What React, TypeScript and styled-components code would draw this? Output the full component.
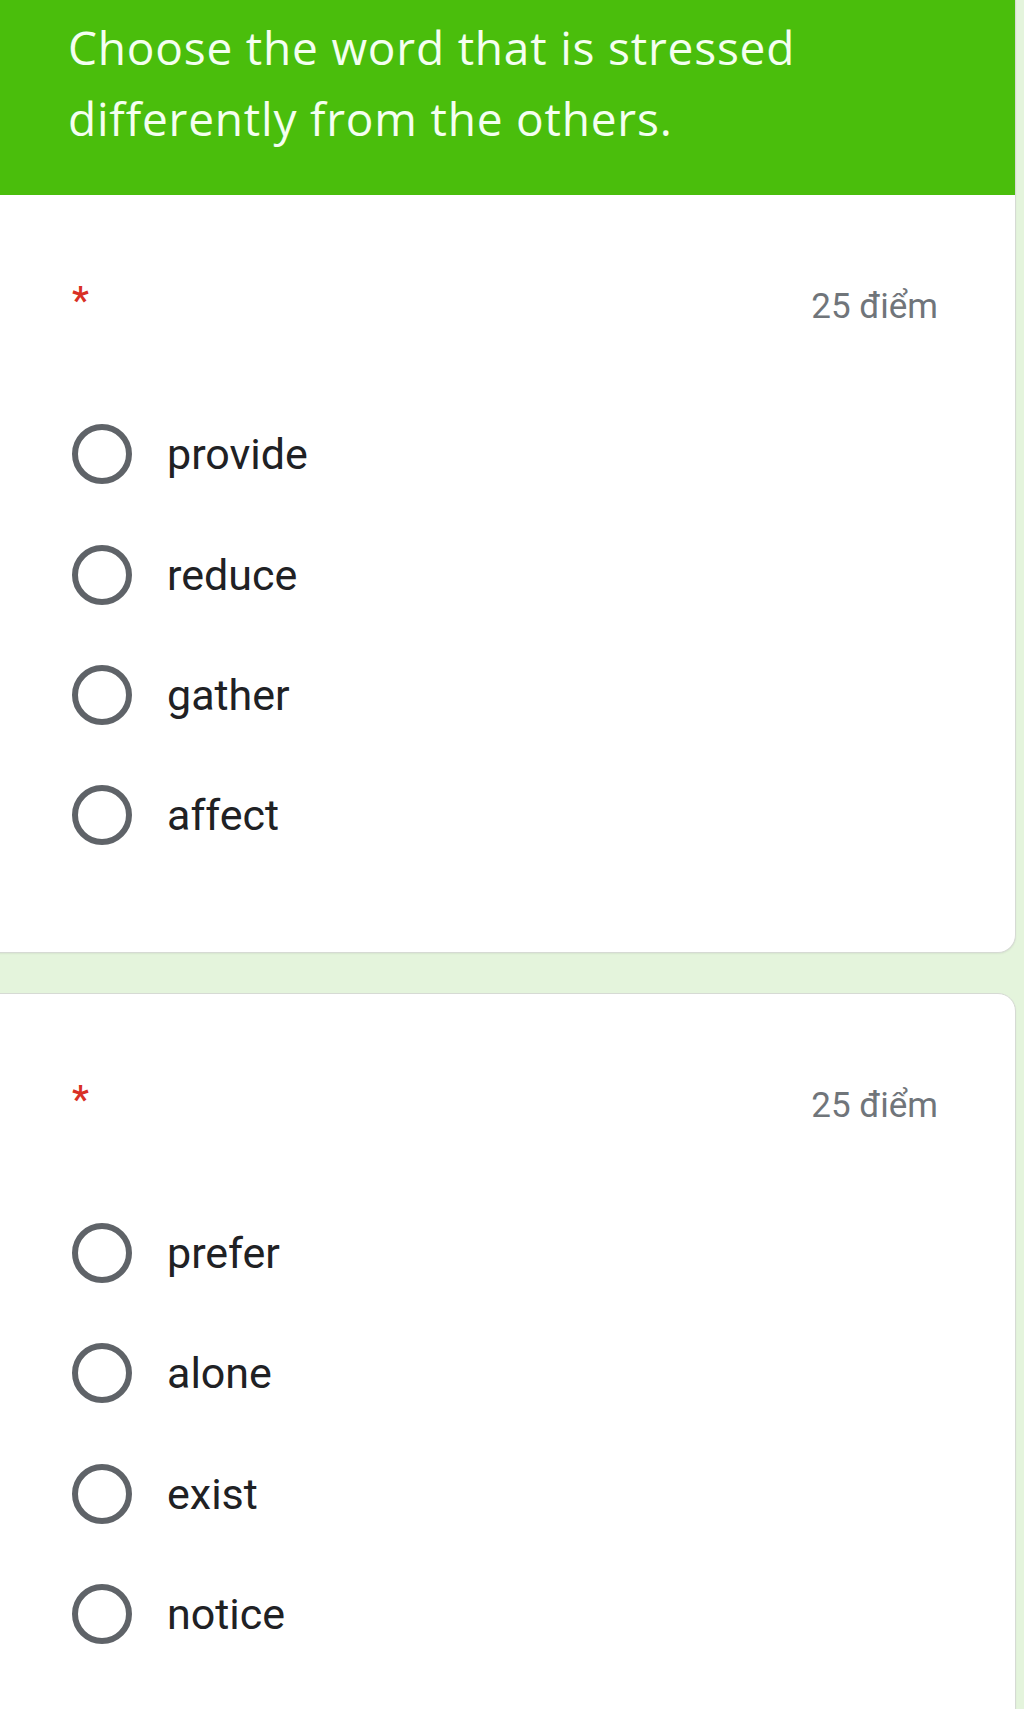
import React from "react";
import styled, { createGlobalStyle } from "styled-components";

const GlobalStyle = createGlobalStyle`
  html, body {
    margin: 0;
    padding: 0;
    background: #e4f4dc;
    overflow-x: hidden;
  }
  body {
    font-family: Roboto, "Liberation Sans", sans-serif;
  }
`;

const Page = styled.div`
  width: 1016px;
  display: flex;
  flex-direction: column;
  gap: 40px;
  padding-bottom: 200px;
`;

const Card = styled.section<{ $top?: boolean }>`
  margin-left: -40px;
  width: 1056px;
  box-sizing: border-box;
  background: #ffffff;
  border: 1px solid #d6dad4;
  border-top: ${(p) => (p.$top ? "none" : "1px solid #d6dad4")};
  border-radius: ${(p) => (p.$top ? "0 0 18px 18px" : "18px")};
  box-shadow: 0 1px 2px rgba(0, 0, 0, 0.06);
  overflow: hidden;
`;

const Banner = styled.header`
  background: #4abe0c;
  height: 195px;
  box-sizing: border-box;
  padding: 12px 0 0 107px;
`;

const Title = styled.h1`
  margin: 0;
  font-family: "Open Sans", Roboto, sans-serif;
  font-weight: 400;
  font-size: 46px;
  line-height: 71px;
  color: #f4fff0;
  letter-spacing: 0.8px;
`;

const Body = styled.div`
  padding: 91px 77px 76px 110px;
`;

const HeaderRow = styled.div`
  display: flex;
  justify-content: space-between;
  align-items: flex-start;
  height: 40px;
`;

const Asterisk = styled.span`
  font-size: 38px;
  font-weight: 500;
  line-height: 40px;
  color: #d93025;
  margin-top: -5px;
  margin-left: 1px;
`;

const Points = styled.span`
  font-size: 35px;
  line-height: 40px;
  color: #70757a;
  margin-top: 1px;
`;

const Options = styled.div`
  margin-top: 68px;
  display: flex;
  flex-direction: column;
`;

const Option = styled.label`
  display: flex;
  align-items: center;
  height: 120.4px;
  gap: 35px;
  cursor: pointer;
`;

const Radio = styled.span`
  width: 60px;
  height: 60px;
  box-sizing: border-box;
  border: 6px solid #5f6368;
  border-radius: 50%;
  flex-shrink: 0;
  margin-left: 1px;
`;

const OptionText = styled.span`
  font-size: 43px;
  color: #202124;
  line-height: 50px;
`;

const questions = [
  { options: ["provide", "reduce", "gather", "affect"] },
  { options: ["prefer", "alone", "exist", "notice"] },
];

function Question({ options }: { options: string[] }) {
  return (
    <>
      <HeaderRow>
        <Asterisk>*</Asterisk>
        <Points>25 điểm</Points>
      </HeaderRow>
      <Options>
        {options.map((o) => (
          <Option key={o}>
            <Radio />
            <OptionText>{o}</OptionText>
          </Option>
        ))}
      </Options>
    </>
  );
}

export default function App() {
  return (
    <>
      <GlobalStyle />
      <Page>
        <Card $top>
          <Banner>
            <Title>
              Choose the word that is stressed
              <br />
              differently from the others.
            </Title>
          </Banner>
          <Body>
            <Question options={questions[0].options} />
          </Body>
        </Card>
        <Card>
          <Body>
            <Question options={questions[1].options} />
          </Body>
        </Card>
      </Page>
    </>
  );
}
